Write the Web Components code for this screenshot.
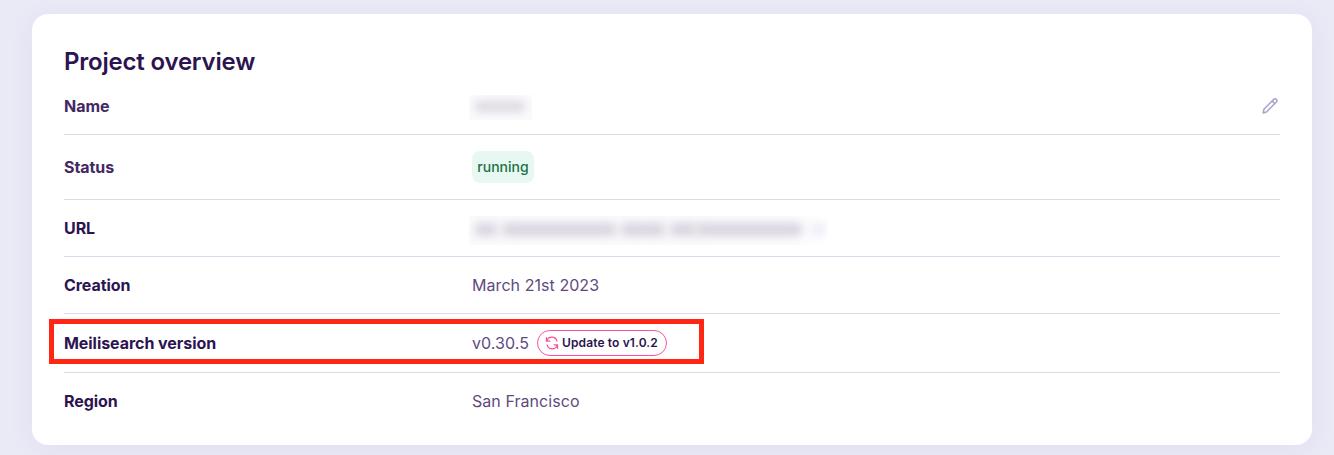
<!DOCTYPE html>
<html lang="en">
<head>
<meta charset="utf-8">
<title>Project overview</title>
<style>
html,body{height:100%}
body{margin:0;overflow:hidden;background:#eae9f6;font-family:Inter,"Liberation Sans",sans-serif;color:#2b1450}
</style>
</head>
<body>
<project-card heading="Project overview">
  <info-row label="Name" class="name"><redacted-value kind="name"></redacted-value><edit-icon slot="action"></edit-icon></info-row>
  <info-row label="Status" class="status"><status-badge>running</status-badge></info-row>
  <info-row label="URL"><redacted-value kind="url"></redacted-value></info-row>
  <info-row label="Creation">March 21st 2023</info-row>
  <info-row label="Meilisearch version" class="version" marked>v0.30.5<update-button>Update to v1.0.2</update-button></info-row>
  <info-row label="Region" class="last">San Francisco</info-row>
</project-card>
<script>
function define(name, html) {
  const t = document.createElement('template');
  t.innerHTML = html;
  customElements.define(name, class extends HTMLElement {
    constructor() {
      super();
      this.attachShadow({mode: 'open'}).append(t.content.cloneNode(true));
    }
    connectedCallback() {
      this.shadowRoot.querySelectorAll('[data-attr]').forEach(e => {
        e.textContent = this.getAttribute(e.dataset.attr);
      });
    }
  });
}

define('project-card', `<style>
:host{display:block;box-sizing:border-box;margin:14px 22px 0 32px;height:431px;padding:32px 32px 0;background:#fff;border-radius:16px;box-shadow:0 4px 28px rgba(60,50,130,.05)}
h2{margin:0;height:32px;line-height:32px;font-size:24px;font-weight:600;letter-spacing:-.2px;color:#2b1450;white-space:nowrap}
</style><h2 data-attr="heading"></h2><slot></slot>`);

define('info-row', `<style>
:host{display:grid;grid-template-columns:408px 1fr auto;align-items:center;box-sizing:border-box;height:57px;border-bottom:1px solid #dcd9e8;font-size:16px;line-height:24px;position:relative}
:host(.name){--label:#432963}
:host(.status){height:65px;--label:#432963}
:host(.version){height:59px}
:host(.last){height:56px;border-bottom:0}
b{font-weight:650;letter-spacing:-.05px;color:var(--label,#2b1450)}
.value{display:flex;align-items:center;color:#5f4a80;white-space:nowrap;letter-spacing:.06px}
.mark{display:none;position:absolute;left:-15px;top:5px;width:655px;height:45px;box-sizing:border-box;border:5px solid #ff2613}
:host([marked]) .mark{display:block}
</style><b data-attr="label"></b><div class="value"><slot></slot></div><slot name="action"></slot><div class="mark"></div>`);

define('status-badge', `<style>
:host{display:flex;align-items:center;justify-content:center;box-sizing:border-box;width:62px;height:32px;border-radius:8px;background:#e7f8f2;color:#1d7044;font-size:14px;line-height:20px;font-weight:500;letter-spacing:0}
</style><slot></slot>`);

define('update-button', `<style>
:host{display:flex;align-items:center;box-sizing:border-box;width:130px;height:26px;margin-left:8px;padding-left:7px;border:1px solid #f754a0;border-radius:13px;color:#2b1450;font-size:12px;line-height:16px;font-weight:600;letter-spacing:.13px}
svg{width:14px;height:14px;margin-right:3px;flex:none}
</style><svg viewBox="0 0 14 14" fill="none" stroke="#f9509c" stroke-width="1.2" stroke-linecap="round" stroke-linejoin="round"><path d="M1.4 1.7v3.5h3.5M1.8 5.1A5.2 5.2 0 0 1 11.9 5.1M12.6 12.3V8.8H9.1M12.2 8.9A5.2 5.2 0 0 1 2.1 8.9"/></svg><slot></slot>`);

define('edit-icon', `<style>:host{display:block;width:20px;height:20px}svg{display:block}</style>
<svg width="20" height="20" viewBox="0 0 20 20" fill="none" stroke="#aaa5cb" stroke-width="1.6" stroke-linecap="round" stroke-linejoin="round"><path d="M3.2 17l.7-3.7L13.8 3.4a1.8 1.8 0 0 1 2.6 2.6L6.5 16zM12.3 5l2.6 2.6"/></svg>`);

define('redacted-value', `<style>
:host{display:flex;align-items:center;gap:5px;box-sizing:border-box;overflow:hidden;margin-left:-3px;padding-left:6px;background:#fbfbfc}
:host([kind=name]){width:63px;height:25px;margin-top:2px}
:host([kind=url]){width:359px;height:29px;margin-top:4px;background:linear-gradient(90deg,#fbfbfc 88%,#fff)}
i{display:none;height:11px;border-radius:3px;background:#dcd8e1;filter:blur(5px);flex:none;position:relative;top:-1px}
:host([kind=name]) .n,:host([kind=url]) .u{display:block}
.n{width:50px}
.u{height:13px;background:#d8d3de}
</style><i class="n"></i><i class="u" style="width:22px"></i><i class="u" style="width:114px"></i><i class="u" style="width:44px"></i><i class="u" style="width:26px"></i><i class="u" style="width:106px;margin-left:-5px"></i><i class="u" style="width:14px;margin-left:4px;background:#eeebf7"></i>`);
</script>
</body>
</html>
